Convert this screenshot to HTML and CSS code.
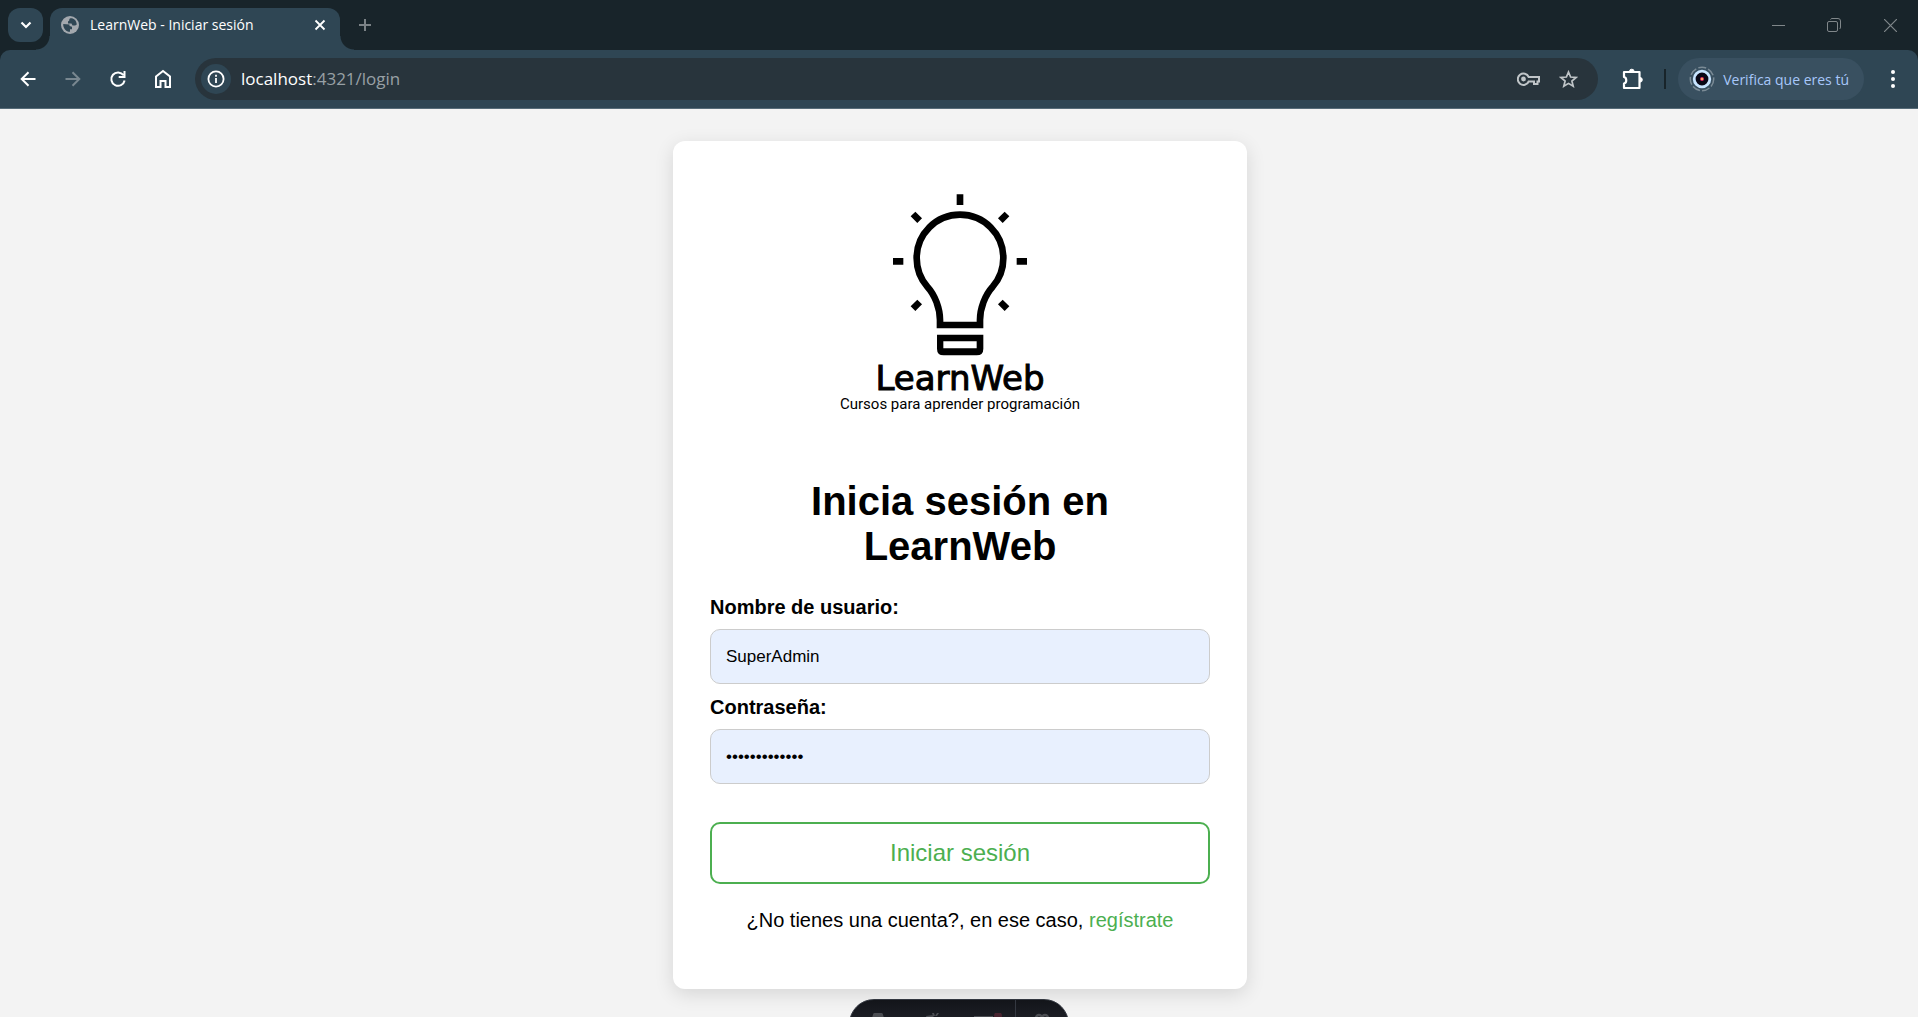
FILE: index.html
```html
<!DOCTYPE html>
<html lang="es">
<head>
<meta charset="utf-8">
<title>LearnWeb - Iniciar sesión</title>
<link rel="stylesheet" href="styles.css">
</head>
<body>
<header class="browser">
  <div class="tab-strip">
    <button class="tab-search" aria-label="Buscar pestañas">
      <svg width="12" height="8" viewBox="0 0 12 8"><path d="M1.500 1.500 6 6l4.500-4.500" fill="none" stroke="#fff" stroke-width="2.200"/></svg>
    </button>
    <div class="tab">
      <svg class="favicon" width="18" height="18" viewBox="0 0 18 18"><circle cx="9" cy="9" r="9" fill="#a3a8ae"/><path d="M9.500 2.200C8.500 2.500 8 3.500 8.300 4.500L7 5.500v2h3.500l1 2h2.700l1.600-1C15.500 4.500 13 2 9.500 2.200zM2.200 8C2 12 5 15.800 9 15.800v-2.600h2v-2.500l-2.500-.8V8.500z" fill="#2f4654"/></svg>
      <span class="tab-title">LearnWeb - Iniciar sesión</span>
      <button class="tab-close" aria-label="Cerrar pestaña">
        <svg width="12" height="12" viewBox="0 0 12 12"><path d="m1.500 1.500 9 9m0-9-9 9" stroke="#fff" stroke-width="1.800"/></svg>
      </button>
    </div>
    <button class="new-tab" aria-label="Nueva pestaña">
      <svg width="14" height="14" viewBox="0 0 14 14"><path d="M7 1v12M1 7h12" stroke="#7b8286" stroke-width="2"/></svg>
    </button>
    <div class="window-controls">
      <button class="window-button" aria-label="Minimizar"><svg width="13" height="13" viewBox="0 0 13 13"><path d="M0 6.500h13" stroke="#80878a"/></svg></button>
      <button class="window-button" aria-label="Restaurar"><svg width="14" height="14" viewBox="0 0 14 14" fill="none" stroke="#80878a"><rect x=".5" y="3.500" width="10" height="10" rx="1.500"/><path d="M3.500 1.500Q4 .5 5 .5h6q2.500 0 2.500 2.500v6q0 1.500-1 2"/></svg></button>
      <button class="window-button" aria-label="Cerrar"><svg width="13" height="13" viewBox="0 0 13 13"><path d="m0 0 13 13M13 0 0 13" stroke="#80878a" stroke-width="1.200"/></svg></button>
    </div>
  </div>
  <div class="toolbar">
    <nav class="nav-buttons" aria-label="Navegación">
      <button class="nav-button" aria-label="Atrás"><svg width="16" height="16" viewBox="0 0 16 16" fill="none" stroke="#fff" stroke-width="2"><path d="M15.500 8H2M8.500 1.200 1.700 8l6.800 6.800"/></svg></button>
      <button class="nav-button" aria-label="Adelante"><svg width="16" height="16" viewBox="0 0 16 16" fill="none" stroke="#798790" stroke-width="2"><path d="M.5 8H14M7.500 1.200 14.300 8l-6.800 6.800"/></svg></button>
      <button class="nav-button" aria-label="Recargar"><svg width="18" height="18" viewBox="0 0 18 18" fill="none" stroke="#fff" stroke-width="2"><path d="M14.500 5.200A6.700 6.700 0 1 0 15.600 10.500M15.500 1v6H9.700"/></svg></button>
      <button class="nav-button" aria-label="Inicio"><svg width="18" height="20" viewBox="0 0 18 20" fill="none" stroke="#fff" stroke-width="2"><path d="M2 7.500 9 2l7 5.500V18h-4.500v-6h-5v6H2z"/></svg></button>
    </nav>
    <div class="omnibox">
      <button class="site-info" aria-label="Información del sitio"><svg width="18" height="18" viewBox="0 0 18 18"><circle cx="9" cy="9" r="7.600" fill="none" stroke="#fff" stroke-width="1.800"/><path d="M9 8v5M9 4.700v2" stroke="#fff" stroke-width="1.800"/></svg></button>
      <span class="url"><span class="url-host">localhost</span>:4321/login</span>
      <button class="omni-button" aria-label="Contraseñas"><svg width="23" height="14" viewBox="0 0 23 14" fill="none" stroke="#c0c5c8" stroke-width="2"><path d="M11.700 5H22v4.500h-1.500V12H17V9.500h-5.300A5.700 5.700 0 1 1 11.700 5z"/><circle cx="6.500" cy="7" r="2.400" fill="#c0c5c8" stroke="none"/></svg></button>
      <button class="omni-button" aria-label="Añadir a marcadores"><svg width="19" height="19" viewBox="0 0 19 19" fill="none" stroke="#c0c5c8" stroke-width="1.700"><path d="m9.500 2 2.100 5 5.400.5-4.100 3.500 1.300 5.300-4.700-2.900-4.700 2.900L6.100 11 2 7.500 7.400 7z"/></svg></button>
    </div>
    <button class="extensions" aria-label="Extensiones"><svg width="22" height="22" viewBox="0 0 22 22"><path d="M2 4h15.500v16H2v-4.500c3-.5 3-6 0-6.500z" fill="none" stroke="#fff" stroke-width="2.200" stroke-linejoin="round"/><path d="M7.500 3.500a2.300 2.300 0 0 1 4.600 0zM18 9.500a2.300 2.300 0 0 1 0 4.600z" fill="#fff" stroke="#fff"/></svg></button>
    <span class="separator"></span>
    <button class="profile">
      <svg width="26" height="26" viewBox="0 0 26 26"><circle cx="13" cy="13" r="11.700" fill="none" stroke="#7b8b96" stroke-width="1.500" stroke-dasharray="8 2.200"/><circle cx="13" cy="13" r="7.800" fill="#080716" stroke="#c7e4ff" stroke-width="2.800"/><circle cx="13" cy="13" r="2" fill="#e22b63"/><circle cx="13" cy="13" r="1" fill="#ffd35a"/></svg>
      <span>Verifica que eres tú</span>
    </button>
    <button class="menu" aria-label="Menú"><svg width="4" height="18" viewBox="0 0 4 18" fill="#fff"><circle cx="2" cy="2" r="2"/><circle cx="2" cy="9" r="2"/><circle cx="2" cy="16" r="2"/></svg></button>
  </div>
</header>

<main class="page">
  <section class="card">
    <div class="logo">
      <svg width="136" height="166" viewBox="216 72 408 498" role="img" aria-label="Bombilla">
        <g fill="none" stroke="#000" stroke-width="20">
          <path d="M360 465V450C360 415 345 375 322 350 300 325 290 295 290 264a130 130 0 0 1 260 0C550 295 540 325 518 350 495 375 480 415 480 450v15z"/>
          <path d="M420 73v32M219 274h31M590 274h31M279 132l20 20M561 132l-20 20M279 416l20-20M561 416l-20-20"/>
        </g>
        <path fill-rule="evenodd" d="M351 494h139v42q0 20-20 20h-99q-20 0-20-20zM370 514v21h100v-21z"/>
      </svg>
      <span class="logo-name">LearnWeb</span>
      <span class="logo-tagline">Cursos para aprender programación</span>
    </div>
    <h1 class="title">Inicia sesión en LearnWeb</h1>
    <form class="form">
      <label class="label" for="username">Nombre de usuario:</label>
      <input class="input" id="username" type="text" value="SuperAdmin">
      <label class="label" for="password">Contraseña:</label>
      <input class="input" id="password" type="password" value="contrasena123">
      <button class="submit" type="submit">Iniciar sesión</button>
    </form>
    <p class="signup">¿No tienes una cuenta?, en ese caso, <a class="link" href="#registro">regístrate</a></p>
  </section>
</main>

<div class="dev-toolbar">
  <button class="dev-button" aria-label="Menú de desarrollo"><svg width="12" height="18" viewBox="0 0 12 18" fill="#4b4d52"><path d="M2.500 0h7q1 0 1.300 1L12 5v8H0V5l1.200-4q.3-1 1.300-1z"/></svg></button>
  <button class="dev-button" aria-label="Inspeccionar"><svg width="14" height="18" viewBox="0 0 14 18" fill="#4b4d52"><path d="m0 3 7-1 1 3-4 9zM6 0h2l1 3H7zM11 0h2l-2 3H9z"/></svg></button>
  <button class="dev-button" aria-label="Auditar"><svg width="28" height="20" viewBox="0 0 28 20"><path d="M0 3h19v15H0z" fill="#4b4d52"/><circle cx="24" cy="3" r="4" fill="#48232f"/></svg></button>
  <button class="dev-button dev-settings" aria-label="Ajustes"><svg width="16" height="18" viewBox="0 0 16 18" fill="none" stroke="#4b4d52" stroke-width="2.500"><path d="M2 5a3 3 0 1 1 6 0 3 3 0 1 1 6 0M2 5l2 5h8l2-5"/></svg></button>
</div>
</body>
</html>
```

FILE: styles.css
```css
* {
  box-sizing: border-box;
}

body {
  margin: 0;
  min-height: 100vh;
  background: #f3f3f3;
  color: #000;
  font-family: "Liberation Sans", Arial, sans-serif;
  overflow: hidden;
}

button {
  display: flex;
  align-items: center;
  justify-content: center;
  margin: 0;
  padding: 0;
  border: 0;
  background: none;
  font-family: inherit;
}

svg {
  display: block;
  flex: none;
}

/* Browser frame */
.browser {
  background: #18242a;
  font-family: "Open Sans", "Noto Sans", sans-serif;
}

.tab-strip {
  display: flex;
  align-items: flex-start;
  height: 50px;
  padding: 8px 0 0 8px;
}

.tab-search {
  width: 35px;
  height: 34px;
  margin-right: 7px;
  border-radius: 12px;
  background: #2f4654;
}

.tab {
  position: relative;
  display: flex;
  align-items: center;
  width: 290px;
  height: 42px;
  padding: 0 12px 8px 11px;
  border-radius: 12px 12px 0 0;
  background: #2f4654;
}

.tab::before,
.tab::after {
  content: "";
  position: absolute;
  bottom: 0;
  width: 14px;
  height: 14px;
}

.tab::before {
  right: 100%;
  background: radial-gradient(circle at 0 0, transparent 13px, #2f4654 14px);
}

.tab::after {
  left: 100%;
  background: radial-gradient(circle at 100% 0, transparent 13px, #2f4654 14px);
}

.tab-title {
  flex: 1;
  margin-left: 11px;
  color: #fff;
  font-size: 14px;
  line-height: 20px;
  white-space: nowrap;
}

.tab-close {
  width: 16px;
  height: 16px;
}

.new-tab {
  width: 34px;
  height: 34px;
  margin-left: 8px;
}

.window-controls {
  display: flex;
  margin-left: auto;
}

.window-button {
  width: 56px;
  height: 34px;
}

.toolbar {
  display: flex;
  align-items: center;
  height: 59px;
  padding-left: 5px;
  border-bottom: 1px solid #566b78;
  border-radius: 10px 10px 0 0;
  background: #2f4654;
}

.nav-buttons {
  display: flex;
  margin-right: 10px;
}

.nav-button {
  width: 45px;
  height: 42px;
}

.omnibox {
  display: flex;
  flex: 1;
  align-items: center;
  height: 42px;
  padding: 0 10px 0 6px;
  border-radius: 21px;
  background: #28343c;
}

.site-info {
  width: 30px;
  height: 30px;
  margin-right: 10px;
  border-radius: 50%;
  background: #2f4654;
}

.url {
  flex: 1;
  color: #98a0a5;
  font-size: 17px;
  line-height: 24px;
}

.url-host {
  color: #fff;
}

.omni-button {
  width: 40px;
  height: 36px;
}

.extensions {
  width: 44px;
  height: 42px;
  margin-left: 13px;
}

.separator {
  width: 2px;
  height: 20px;
  margin: 0 12px 0 9px;
  background: #18242a;
}

.profile {
  gap: 8px;
  height: 42px;
  margin-right: 3px;
  padding: 0 15px 0 11px;
  border-radius: 21px;
  background: #395060;
  color: #a8c7fa;
  font-size: 14px;
  white-space: nowrap;
}

.menu {
  width: 51px;
  height: 42px;
}

/* Login page */
.page {
  display: flex;
  justify-content: center;
  padding: 32px 16px 28px 18px;
}

.card {
  width: 100%;
  max-width: 574px;
  padding: 53px 37px 57px;
  border-radius: 12px;
  background: #fff;
  box-shadow: 0 5px 19px rgba(0, 0, 0, 0.12);
}

.logo {
  display: flex;
  flex-direction: column;
  align-items: center;
}

.logo-name {
  font-family: "DejaVu Sans", sans-serif;
  font-size: 34px;
  line-height: 36px;
  -webkit-text-stroke: 1px #000;
}

.logo-tagline {
  font-family: Roboto, sans-serif;
  font-size: 15px;
  line-height: 16px;
}

.title {
  max-width: 400px;
  margin: 67px auto 27px;
  font-size: 40px;
  line-height: 45px;
  text-align: center;
}

.form {
  display: flex;
  flex-direction: column;
}

.label {
  margin-bottom: 10px;
  font-size: 20px;
  font-weight: 700;
  line-height: 23px;
}

.input {
  height: 55px;
  margin: 0 0 12px;
  padding: 0 15px;
  border: 1px solid #ccc;
  border-radius: 10px;
  background: #e8f0fe;
  color: #000;
  font-family: inherit;
  font-size: 17px;
}

.submit {
  height: 62px;
  margin-top: 26px;
  border: 2px solid #4caf50;
  border-radius: 10px;
  background: #fff;
  color: #4caf50;
  font-size: 24px;
}

.signup {
  margin: 25px 0 0;
  font-size: 20px;
  line-height: 23px;
  text-align: center;
}

.link {
  color: #4caf50;
  text-decoration: none;
}

/* Development toolbar, tucked under the lower edge */
.dev-toolbar {
  position: fixed;
  bottom: -32px;
  left: 50%;
  display: flex;
  width: 220px;
  height: 50px;
  overflow: hidden;
  border: 1px solid #343841;
  border-radius: 25px;
  background: linear-gradient(#13151a, #2a2d35);
  transform: translateX(-50%);
}

.dev-button {
  flex: 1;
  align-items: flex-start;
  padding-top: 13px;
}

.dev-settings {
  flex: 0 0 53px;
  border-left: 1px solid #343841;
}
```
